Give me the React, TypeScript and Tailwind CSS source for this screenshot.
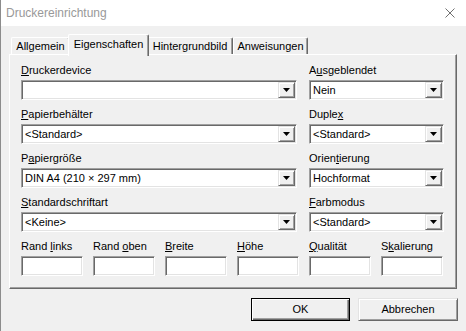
import type { ReactNode } from "react";

const sunken =
  "border border-t-[#a0a0a0] border-l-[#a0a0a0] border-b-white border-r-white bg-white shadow-[inset_1px_1px_0_#696969,inset_-1px_-1px_0_#e3e3e3]";

const raised =
  "border border-t-[#e3e3e3] border-l-[#e3e3e3] border-b-[#696969] border-r-[#696969] bg-[#f0f0f0] shadow-[inset_1px_1px_0_#fff,inset_-1px_-1px_0_#a0a0a0]";

function Combo({ value }: { value?: string }) {
  return (
    <div className={`${sunken} h-[20px] flex items-stretch p-px`}>
      <div className="flex-1 flex items-center pl-[2px] text-black whitespace-nowrap">{value}</div>
      <div className={`${raised} w-[17px] flex items-center justify-center`}>
        <svg width="7" height="4" viewBox="0 0 7 4">
          <polygon points="0,0 7,0 3.5,4" fill="#000" />
        </svg>
      </div>
    </div>
  );
}

function Field({ label, value, wide }: { label: ReactNode; value?: string; wide?: boolean }) {
  return (
    <div className={`flex flex-col gap-[3px] ${wide ? "w-[276px]" : "w-[135px]"}`}>
      <div className="h-[13px] leading-[13px] whitespace-nowrap">{label}</div>
      <Combo value={value} />
    </div>
  );
}

function Edit({ label }: { label: ReactNode }) {
  return (
    <div className="flex flex-col gap-[3px] w-[62px]">
      <div className="h-[13px] leading-[13px] whitespace-nowrap">{label}</div>
      <div className={`${sunken} h-[20px]`} />
    </div>
  );
}

function Tab({ children, w, active }: { children: ReactNode; w: string; active?: boolean }) {
  return (
    <div
      className={`${w} ${
        active ? "h-[22px] -mb-[2px] -mx-[2px] z-10 pb-[3px]" : "h-[17px]"
      } relative flex items-center justify-center bg-[#f0f0f0] border-t border-l border-r border-t-white border-l-white border-r-[#696969] rounded-t-[2px] shadow-[inset_-1px_0_0_#a0a0a0] whitespace-nowrap`}
    >
      {children}
    </div>
  );
}

export default function App() {
  return (
    <div className="w-[466px] h-[331px] bg-[#f0f0f0] border-l border-[#8c8c8c] flex flex-col overflow-hidden text-[11px] text-black font-[family-name:'Liberation_Sans',Arial,sans-serif]">
      {/* Title bar */}
      <div className="h-[26px] bg-white flex items-center justify-between pl-[5px] pr-[11px]">
        <span className="text-[12px] text-[#999999]">Druckereinrichtung</span>
        <svg width="10" height="10" viewBox="0 0 10 10">
          <path d="M0.5 0.5 L9.5 9.5 M9.5 0.5 L0.5 9.5" stroke="#707070" strokeWidth="1" />
        </svg>
      </div>

      <div className="pt-[8px] px-[8px]">
        {/* Tabs */}
        <div className="flex items-end h-[20px] pl-[2px] relative z-10">
          <Tab w="w-[59px]">Allgemein</Tab>
          <Tab w="w-[81px]" active>
            Eigenschaften
          </Tab>
          <Tab w="w-[86px]">Hintergrundbild</Tab>
          <Tab w="w-[75px]">Anweisungen</Tab>
        </div>

        {/* Panel */}
        <div className="w-[448px] h-[235px] border border-t-white border-l-white border-b-[#696969] border-r-[#696969] shadow-[inset_-1px_-1px_0_#a0a0a0] pt-[9px] pl-[11px] flex flex-col gap-[8px]">
          <div className="flex gap-[12px]">
            <Field wide label={<><u>D</u>ruckerdevice</>} />
            <Field label={<>A<u>u</u>sgeblendet</>} value="Nein" />
          </div>
          <div className="flex gap-[12px]">
            <Field wide label={<><u>P</u>apierbehälter</>} value="<Standard>" />
            <Field label={<>Duple<u>x</u></>} value="<Standard>" />
          </div>
          <div className="flex gap-[12px]">
            <Field wide label={<>P<u>a</u>piergröße</>} value="DIN A4 (210 × 297 mm)" />
            <Field label={<>Orien<u>t</u>ierung</>} value="Hochformat" />
          </div>
          <div className="flex gap-[12px]">
            <Field wide label={<><u>S</u>tandardschriftart</>} value="<Keine>" />
            <Field label={<><u>F</u>arbmodus</>} value="<Standard>" />
          </div>
          <div className="flex gap-[10px]">
            <Edit label={<>Rand <u>l</u>inks</>} />
            <Edit label={<>Rand <u>o</u>ben</>} />
            <Edit label={<><u>B</u>reite</>} />
            <Edit label={<><u>H</u>öhe</>} />
            <Edit label={<><u>Q</u>ualität</>} />
            <Edit label={<>S<u>k</u>alierung</>} />
          </div>
        </div>

        {/* Buttons */}
        <div className="flex justify-end gap-[8px] mt-[9px] pr-[0px]">
          <button className="w-[99px] h-[23px] border border-black bg-[#f0f0f0] shadow-[inset_1px_1px_0_#fff,inset_-1px_-1px_0_#696969,inset_-2px_-2px_0_#a0a0a0]">
            OK
          </button>
          <button className={`${raised} w-[100px] h-[23px]`}>Abbrechen</button>
        </div>
      </div>
    </div>
  );
}
